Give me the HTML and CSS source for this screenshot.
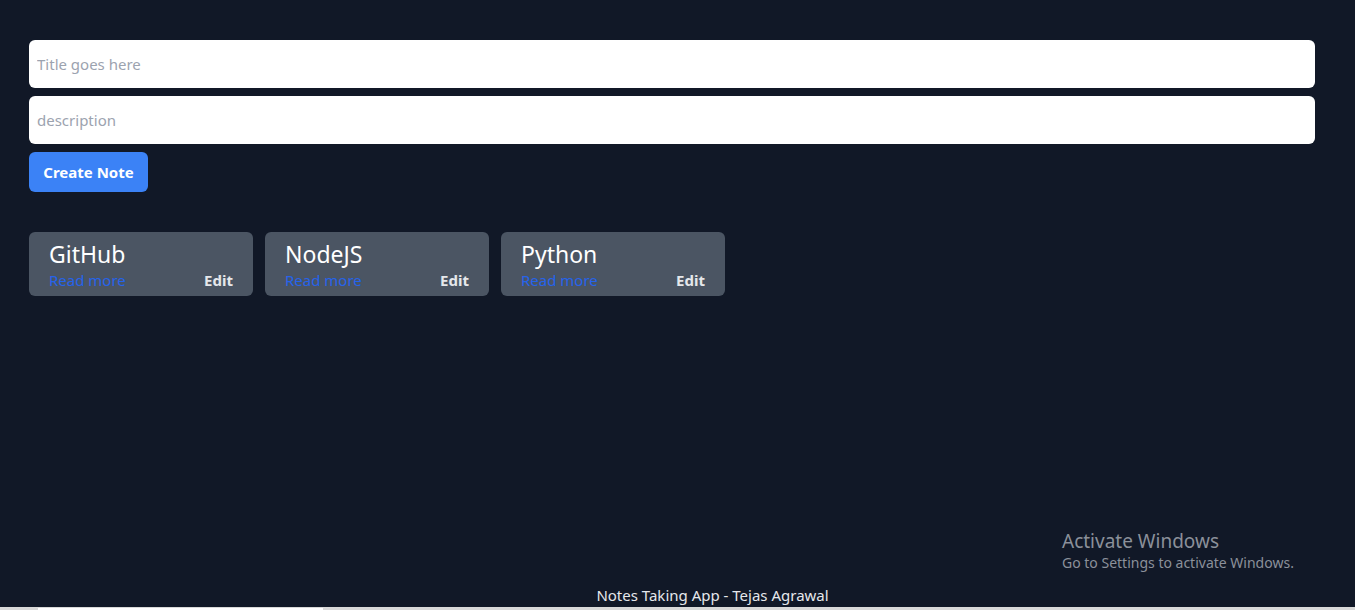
FILE: index.html
```html
<!DOCTYPE html>
<html>
<head>
<meta charset="utf-8">
<link rel="stylesheet" href="styles.css">
</head>
<body>
<div class="page">
  <main class="main">
    <form class="form">
      <input class="field" type="text" placeholder="Title goes here">
      <input class="field" type="text" placeholder="description">
      <button class="btn" type="button">Create Note</button>
    </form>
    <div class="notes">
      <div class="card">
        <div class="card-title">GitHub</div>
        <div class="card-row"><a class="more" href="#">Read more</a><span class="edit">Edit</span></div>
      </div>
      <div class="card">
        <div class="card-title">NodeJS</div>
        <div class="card-row"><a class="more" href="#">Read more</a><span class="edit">Edit</span></div>
      </div>
      <div class="card">
        <div class="card-title">Python</div>
        <div class="card-row"><a class="more" href="#">Read more</a><span class="edit">Edit</span></div>
      </div>
    </div>
  </main>
  <footer class="footer">Notes Taking App - Tejas Agrawal</footer>
</div>
<div class="watermark">
  <div class="wm-title">Activate Windows</div>
  <div class="wm-sub">Go to Settings to activate Windows.</div>
</div>
<div class="taskbar"><span class="tb-item"></span></div>
</body>
</html>
```
FILE: styles.css
```css
* { box-sizing: border-box; }
html, body { margin: 0; padding: 0; height: 100%; }
body {
  background: #111827;
  font-family: "Noto Sans", "Open Sans", sans-serif;
  overflow: hidden;
}
.page {
  height: 610px;
  display: flex;
  flex-direction: column;
}
.main {
  flex: 1;
  padding: 40px 40px 0 29px;
}
.form {
  display: flex;
  flex-direction: column;
  align-items: flex-start;
  gap: 8px;
}
.field {
  width: 100%;
  height: 48px;
  border: none;
  border-radius: 6px;
  background: #fff;
  padding: 0 8px;
  font-family: inherit;
  font-size: 15px;
  color: #111;
  outline: none;
}
.field::placeholder { color: #9ca3af; }
.btn {
  height: 40px;
  width: 119px;
  border: none;
  border-radius: 6px;
  background: #3b82f6;
  color: #fff;
  font-family: inherit;
  font-weight: 700;
  font-size: 15px;
  padding: 0;
}
.notes {
  margin-top: 40px;
  display: flex;
  gap: 12px;
}
.card {
  width: 224px;
  height: 64px;
  background: #4b5563;
  border-radius: 6px;
  padding: 8px 20px 0 20px;
}
.card-title {
  color: #fff;
  font-size: 23px;
  line-height: 28px;
}
.card-row {
  display: flex;
  justify-content: space-between;
  align-items: center;
  line-height: 24px;
}
.more {
  color: #2563eb;
  text-decoration: none;
  font-size: 15px;
}
.edit {
  color: #e5e7eb;
  font-weight: 700;
  font-size: 15px;
}
.footer {
  color: #e5e7eb;
  font-size: 15px;
  text-align: center;
  padding-left: 70px;
  padding-top: 2px;
  height: 27px;
  line-height: 20px;
}
.watermark {
  position: absolute;
  left: 1062px;
  top: 529px;
  color: #8b909a;
}
.wm-title { font-size: 19px; line-height: 24px; }
.wm-sub { font-size: 14px; line-height: 20px; }
.taskbar {
  position: absolute;
  left: 0;
  right: 0;
  top: 607px;
  height: 3px;
  background: #d9d9d9;
}
.tb-item {
  position: absolute;
  left: 38px;
  width: 285px;
  top: 1px;
  height: 2px;
  background: #fff;
}
```
